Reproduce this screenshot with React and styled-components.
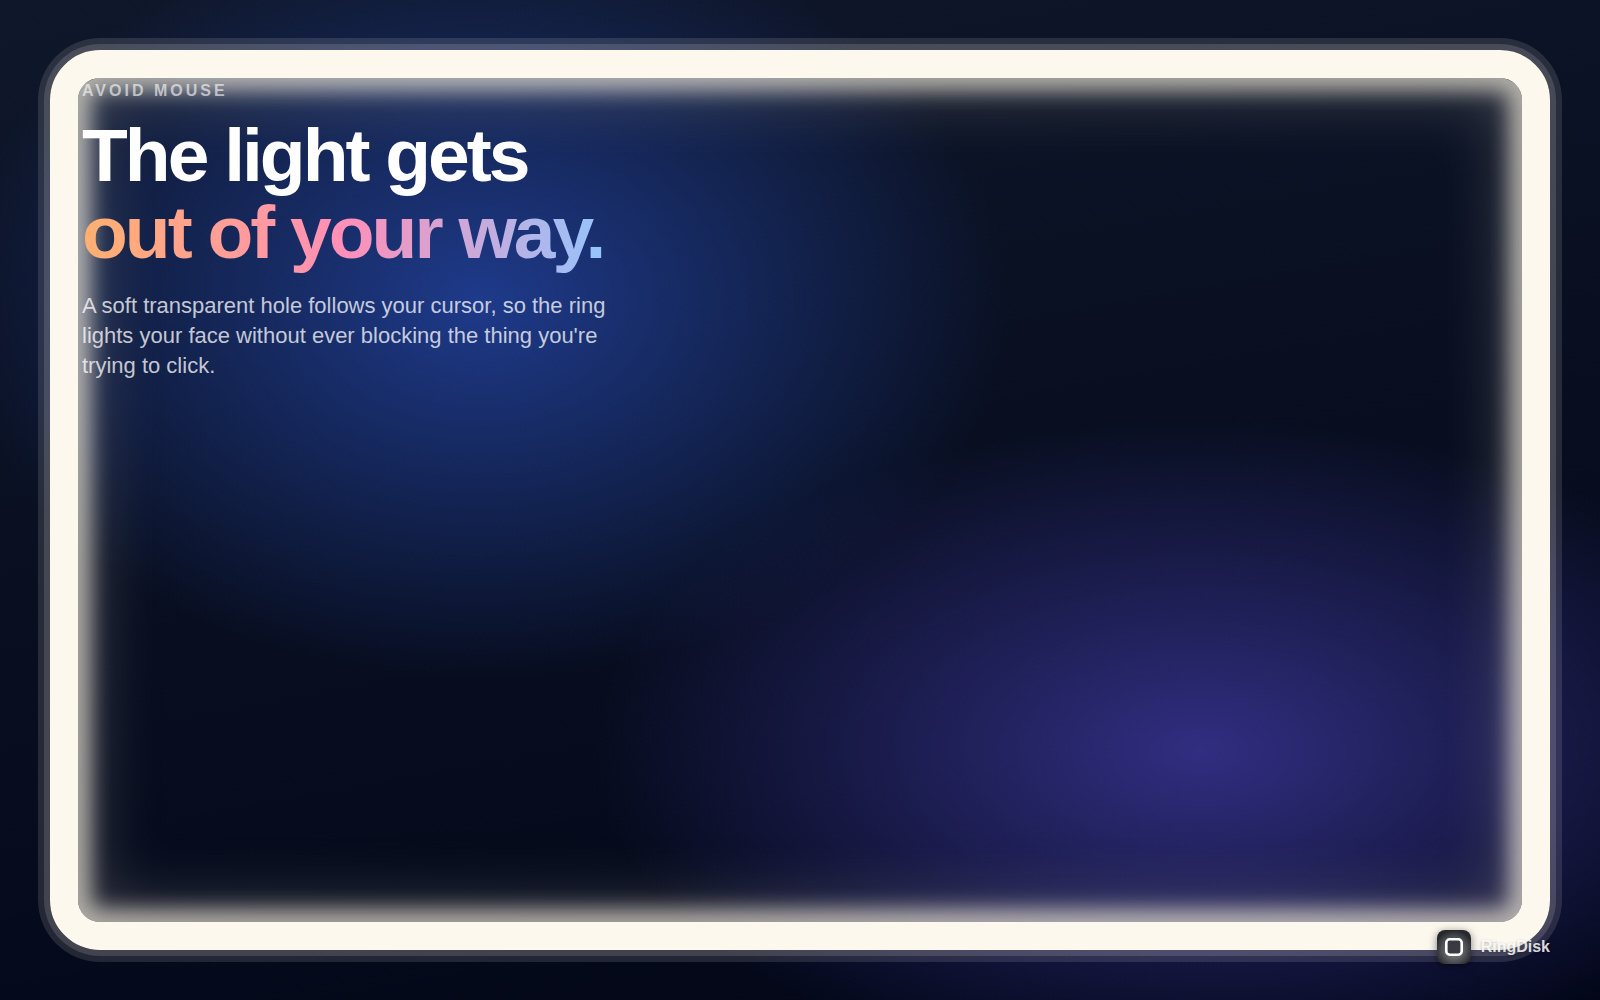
import React from 'react';
import styled, { createGlobalStyle } from 'styled-components';

const GlobalStyle = createGlobalStyle`
    * {
        box-sizing: border-box;
    }

    body {
        margin: 0;
        background: #020617;
        font-family: "Liberation Sans", Helvetica, Arial, sans-serif;
        -webkit-font-smoothing: antialiased;
    }
`;

function App() {
    return (
        <>
            <GlobalStyle />
            <Stage>
                <Ring />
                <Copy>
                    <Eyebrow>Avoid Mouse</Eyebrow>
                    <Title>
                        The light gets
                        <Highlight>out of your way.</Highlight>
                    </Title>
                    <Lead>
                        A soft transparent hole follows your cursor, so the ring lights your face
                        without ever blocking the thing you're trying to click.
                    </Lead>
                </Copy>
                <Brand>
                    <BrandIcon>
                        <svg width="18" height="18" viewBox="0 0 18 18" fill="none">
                            <rect x="1.3" y="1.3" width="15.4" height="15.4" rx="3.4" fill="#3a3b42" stroke="#fff" strokeWidth="2.6" />
                        </svg>
                    </BrandIcon>
                    RingDisk
                </Brand>
            </Stage>
        </>
    );
}

export default App;

const Stage = styled.main`
    position: relative;
    display: flex;
    flex-direction: column;
    justify-content: space-between;
    min-height: 100vh;
    padding: 81px 50px 36px 82px;
    overflow: hidden;
    background:
        radial-gradient(33% 38% at 30% 30%, #1e3a8a, transparent),
        radial-gradient(38% 33% at 75% 75%, #312e81, transparent),
        linear-gradient(170deg, #0f172a, #020617);
`;

/* the light itself, laid over the desktop */
const Ring = styled.div`
    position: absolute;
    inset: 50px;
    border: 28px solid #fcf8ee;
    border-radius: 50px;
    pointer-events: none;
    box-shadow:
        0 0 0 6px rgba(255, 250, 240, 0.14),
        0 0 0 12px rgba(255, 250, 240, 0.12),
        inset 0 0 20px 13px rgba(255, 248, 230, 0.6),
        inset 0 0 70px 10px rgba(255, 248, 230, 0.26);
`;

const Copy = styled.section`
    position: relative;
    max-width: 560px;
`;

const Eyebrow = styled.p`
    margin: 0 0 16px;
    font-size: 16px;
    line-height: 20px;
    font-weight: 700;
    letter-spacing: 3px;
    text-transform: uppercase;
    color: rgba(255, 255, 255, 0.6);
`;

const Title = styled.h1`
    margin: 0;
    font-size: 75px;
    line-height: 77px;
    font-weight: 700;
    letter-spacing: -3px;
    color: #fff;
`;

const Highlight = styled.span`
    display: block;
    width: fit-content;
    padding: 0 4px 6px 0;
    background: linear-gradient(90deg, #ffb070, #ff8fb8 50%, #93c5fd);
    -webkit-background-clip: text;
    background-clip: text;
    color: transparent;
`;

const Lead = styled.p`
    margin: 14px 0 0;
    font-size: 22px;
    line-height: 30px;
    color: rgba(255, 255, 255, 0.75);
`;

const Brand = styled.div`
    position: relative;
    display: flex;
    align-items: center;
    align-self: flex-end;
    gap: 10px;
    font-size: 16px;
    font-weight: 700;
    color: rgba(255, 255, 255, 0.85);
    text-shadow: 0 1px 3px rgba(0, 0, 0, 0.3);
`;

const BrandIcon = styled.span`
    display: grid;
    place-items: center;
    width: 34px;
    height: 34px;
    border-radius: 8px;
    background: radial-gradient(circle at 50% 58%, #77787c 20%, #27282d 75%);
    box-shadow: 0 2px 8px rgba(0, 0, 0, 0.5);
`;
